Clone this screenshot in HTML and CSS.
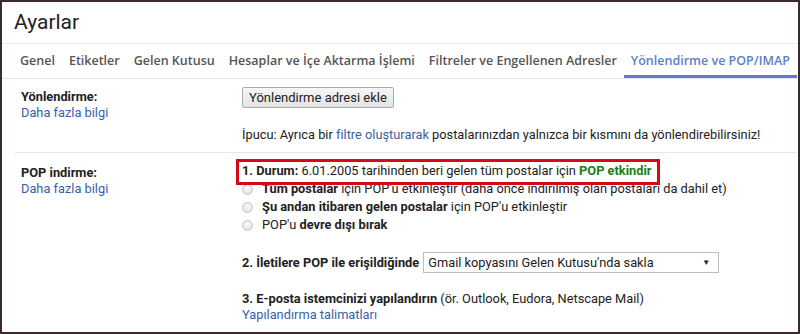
FILE: index.html
```html
<!DOCTYPE html>
<html lang="tr">
<head>
<meta charset="utf-8">
<title>Ayarlar</title>
<link rel="stylesheet" href="styles.css">
</head>
<body>
<div class="frame">
  <header class="header"><h1 class="title">Ayarlar</h1></header>
  <nav class="tabs">
    <span class="tab">Genel</span>
    <span class="tab">Etiketler</span>
    <span class="tab">Gelen Kutusu</span>
    <span class="tab">Hesaplar ve İçe Aktarma İşlemi</span>
    <span class="tab">Filtreler ve Engellenen Adresler</span>
    <span class="tab active">Yönlendirme ve POP/IMAP</span>
  </nav>
  <section class="row row-fwd">
    <div class="label">
      <div class="label-title">Yönlendirme:</div>
      <a class="link">Daha fazla bilgi</a>
    </div>
    <div class="content">
      <button class="btn">Yönlendirme adresi ekle</button>
      <p class="tip">İpucu: Ayrıca bir <a class="link">filtre oluşturarak</a> postalarınızdan yalnızca bir kısmını da yönlendirebilirsiniz!</p>
    </div>
  </section>
  <section class="row row-pop">
    <div class="label">
      <div class="label-title">POP indirme:</div>
      <a class="link">Daha fazla bilgi</a>
    </div>
    <div class="content">
      <div class="status"><b>1. Durum:</b> 6.01.2005 tarihinden beri gelen tüm postalar için <b class="green">POP etkindir</b></div>
      <div class="radios">
        <label class="radio"><span class="dot"></span><span><b>Tüm postalar</b> için POP'u etkinleştir (daha önce indirilmiş olan postaları da dahil et)</span></label>
        <label class="radio"><span class="dot"></span><span><b>Şu andan itibaren gelen postalar</b> için POP'u etkinleştir</span></label>
        <label class="radio"><span class="dot"></span><span>POP'u <b>devre dışı bırak</b></span></label>
      </div>
      <div class="step2"><b>2. İletilere POP ile erişildiğinde</b> <span class="select"><span>Gmail kopyasını Gelen Kutusu'nda sakla</span><span class="arrow">▼</span></span></div>
      <div class="step3"><b>3. E-posta istemcinizi yapılandırın</b> (ör. Outlook, Eudora, Netscape Mail)</div>
      <a class="link">Yapılandırma talimatları</a>
      <div class="highlight"></div>
    </div>
  </section>
</div>
</body>
</html>
```
FILE: styles.css
```css
* { box-sizing: border-box; }
html, body { margin: 0; padding: 0; background: #fff; }
.frame {
  width: 800px;
  height: 334px;
  border: 2px solid #3b2a2f;
  overflow: hidden;
  font-family: Roboto, "Liberation Sans", Arial, sans-serif;
  font-size: 12.8px;
  color: #222;
}
.header {
  height: 42px;
  border-bottom: 1px solid #eeeeee;
  padding-left: 12px;
}
.title {
  margin: 0;
  font-family: Roboto, sans-serif;
  font-weight: 400;
  font-size: 21px;
  line-height: 41px;
  color: #222;
}
.tabs {
  display: flex;
  height: 35px;
  padding-left: 11px;
  border-bottom: 1px solid #e6e6e6;
  font-family: "Open Sans", sans-serif;
  font-size: 12.5px;
}
.tab {
  padding: 0 7px;
  line-height: 33px;
  color: #555;
  font-weight: 600;
  white-space: nowrap;
}
.tab.active {
  color: #5a7fc8;
  border-bottom: 3px solid #5a7fc8;
}
.row {
  display: grid;
  grid-template-columns: 221px 1fr;
  padding-left: 19px;
}
.row-fwd {
  padding-top: 8px;
  height: 74px;
  border-bottom: 1px solid #e6e6e6;
  margin-right: 1px;
  margin-left: 13px;
  padding-left: 6px;
}
.label-title { font-weight: 700; line-height: 16px; margin-top: 2px; }
.link { color: #3a5fa8; text-decoration: none; display: block; line-height: 16px; }
.tip .link { display: inline; }
.btn {
  font-family: Roboto, sans-serif;
  font-size: 13px;
  color: #222;
  height: 21px;
  padding: 0 6px;
  border: 1px solid #adadad;
  border-radius: 2px;
  background: linear-gradient(#f6f6f6, #e4e4e4);
}
.tip { margin: 19px 0 0; line-height: 16px; }
.row-pop { padding-top: 10px; }
.content { position: relative; }
.status { line-height: 16px; }
.green { color: #1b7d1b; }
.radios { margin-top: 1px; }
.radio { display: flex; align-items: center; gap: 9px; line-height: 18px; }
.dot {
  width: 11px; height: 11px; border-radius: 50%;
  border: 1px solid #c6c6c6;
  background: radial-gradient(circle at 50% 35%, #fafafa, #dcdcdc);
}
.step2 { margin-top: 18px; display: flex; align-items: center; gap: 4px; }
.select {
  display: inline-flex; justify-content: space-between; align-items: center;
  width: 296px; height: 21px; padding: 0 8px 0 4px;
  border: 1px solid #bdbdbd; font-weight: 400;
}
.arrow { font-size: 8px; }
.step3 { margin-top: 18px; line-height: 16px; }
.highlight {
  position: absolute;
  left: -6px; top: -4px;
  width: 424px; height: 26px;
  border: 3px solid #d60a17;
}
```
